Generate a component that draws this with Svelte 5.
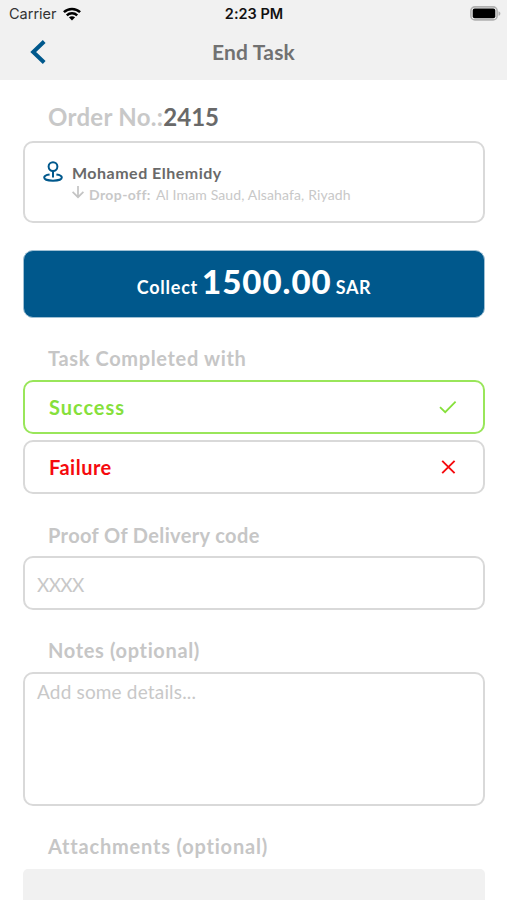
<script>
	let result = 'success';
	let code = '';
	let notes = '';

	const order = {
		number: '2415',
		customer: 'Mohamed Elhemidy',
		address: 'Al Imam Saud, Alsahafa, Riyadh',
		amount: '1500.00',
		currency: 'SAR'
	};

	const options = [
		{ value: 'success', label: 'Success' },
		{ value: 'failure', label: 'Failure' }
	];
</script>

<div class="screen">
	<header>
		<div class="status">
			<div class="carrier">
				<span>Carrier</span>
				<svg width="18" height="14" viewBox="0 0 18 14">
					<g fill="none" stroke="#000" stroke-width="2.5">
						<path d="M0.9 5.2C5.4 0.9 12.6 0.9 17.1 5.2" />
						<path d="M3.8 8.3C6.7 5.6 11.3 5.6 14.2 8.3" />
					</g>
					<path d="M5.9 10.3C7.7 8.8 10.3 8.8 12.1 10.3L9 13.5Z" />
				</svg>
			</div>
			<div class="time">2:23 PM</div>
			<svg class="battery" width="31" height="15" viewBox="0 0 31 15">
				<rect x="0.9" y="0.9" width="26.2" height="13" rx="4" fill="#f1f1f1" stroke="#b0b0b0" stroke-width="1.6" />
				<rect x="2.7" y="2.6" width="22.6" height="9.6" rx="2" />
				<path d="M28.5 5.2C31 6 31 9 28.5 9.8Z" fill="#b0b0b0" />
			</svg>
		</div>
		<div class="nav">
			<button class="back" aria-label="Back">
				<svg width="16" height="24" viewBox="0 0 16 24">
					<path d="M14.2 1.5L3.2 12L14.2 22.5" fill="none" stroke="#00588c" stroke-width="4" />
				</svg>
			</button>
			<h1>End Task</h1>
		</div>
	</header>

	<main>
		<h2 class="order"><span class="no">Order No.:</span><span class="num">{order.number}</span></h2>

		<div class="box customer">
			<svg width="20" height="22" viewBox="0 0 20 22" fill="none" stroke="#00588c" stroke-width="2">
				<circle cx="10" cy="5.6" r="4.4" />
				<path d="M10 10V16.5" />
				<path d="M6.6 13.4C3.5 13.8 1.2 14.9 1.2 16.5C1.2 18.4 5 19.7 10 19.7S18.8 18.4 18.8 16.5C18.8 14.9 16.5 13.8 13.4 13.4" />
			</svg>
			<div class="details">
				<div class="name">{order.customer}</div>
				<div class="drop">
					<svg width="12" height="14" viewBox="0 0 12 14" fill="none" stroke="#c4c4c4" stroke-width="1.7">
						<path d="M6 0V11M0.6 5.8L6 11.2L11.4 5.8" />
					</svg>
					<b>Drop-off:</b>
					<span>{order.address}</span>
				</div>
			</div>
		</div>

		<button class="collect">
			<span class="verb">Collect</span>
			<span class="amount">{order.amount}</span>
			<span class="currency">{order.currency}</span>
		</button>

		<h3 class="task">Task Completed with</h3>
		{#each options as option}
			<button
				class="box option {option.value}"
				class:selected={result === option.value}
				on:click={() => (result = option.value)}
			>
				<span>{option.label}</span>
				{#if option.value === 'success'}
					<svg width="18" height="14" viewBox="0 0 18 14">
						<path d="M1 7.2L6.2 12.2L16.6 1.6" fill="none" stroke="currentColor" stroke-width="1.8" />
					</svg>
				{:else}
					<svg width="18" height="14" viewBox="0 0 18 14">
						<path d="M3.2 0.8L15.6 13.2M15.6 0.8L3.2 13.2" fill="none" stroke="currentColor" stroke-width="1.9" />
					</svg>
				{/if}
			</button>
		{/each}

		<h3 class="proof">Proof Of Delivery code</h3>
		<input class="box code" placeholder="XXXX" bind:value={code} />

		<h3 class="notes-label">Notes (optional)</h3>
		<textarea class="box notes" placeholder="Add some details..." bind:value={notes}></textarea>

		<h3 class="files-label">Attachments (optional)</h3>
		<div class="files"></div>
	</main>
</div>

<style>
	:global(body) {
		margin: 0;
		background: #fff;
	}
	.screen {
		height: 100vh;
		overflow: hidden;
		background: #fff;
		font-family: Lato, sans-serif;
		font-variant-ligatures: none;
		color: #696969;
	}
	.screen * {
		box-sizing: border-box;
	}
	svg {
		display: block;
		flex: none;
	}
	button {
		font: inherit;
		cursor: pointer;
	}

	header {
		height: 80px;
		background: #f1f1f1;
	}
	.status {
		display: grid;
		grid-template-columns: 1fr auto 1fr;
		align-items: center;
		height: 27px;
		padding: 0 6px 0 9px;
		font-family: Inter, sans-serif;
		font-size: 14.5px;
		line-height: 27px;
		color: #111;
	}
	.carrier {
		display: flex;
		align-items: center;
		gap: 6px;
		color: #333;
	}
	.time {
		margin-right: 2px;
		font-weight: 600;
	}
	.battery {
		justify-self: end;
	}
	.nav {
		display: grid;
		grid-template-columns: 1fr auto 1fr;
		align-items: center;
		height: 50px;
	}
	.back {
		width: 48px;
		padding: 0 0 0 30px;
		border: 0;
		background: none;
	}
	h1 {
		margin: 0;
		font-size: 21px;
		line-height: 50px;
		letter-spacing: 0.2px;
		color: #717171;
	}

	main {
		display: flex;
		flex-direction: column;
		padding: 0 22px 0 23px;
	}
	h2,
	h3 {
		margin: 0 0 0 25px;
		white-space: nowrap;
	}
	h2 {
		margin-top: 20px;
		font-size: 24px;
		line-height: 34px;
	}
	.no {
		letter-spacing: 0.3px;
		color: #c8c8c8;
	}
	h3 {
		font-size: 20px;
		line-height: 26px;
		letter-spacing: 0.65px;
		color: #c6c6c6;
	}

	.box {
		width: 100%;
		border: 2px solid #d9d9d9;
		border-radius: 10px;
		background: #fff;
	}
	.customer {
		display: flex;
		gap: 9px;
		height: 82px;
		margin-top: 7px;
		padding: 18px 18px 0;
	}
	.name {
		font-size: 16px;
		font-weight: bold;
		line-height: 24px;
		letter-spacing: 0.5px;
		white-space: nowrap;
	}
	.drop {
		display: flex;
		align-items: center;
		height: 18px;
		font-size: 14px;
		letter-spacing: 0.13px;
		color: #c8c8c8;
		white-space: nowrap;
	}
	.drop svg {
		margin-top: -3px;
	}
	.drop b {
		margin: 0 5px;
		letter-spacing: 0.4px;
	}

	.collect {
		display: flex;
		justify-content: center;
		align-items: baseline;
		gap: 4px;
		height: 68px;
		margin-top: 27px;
		padding: 0;
		border: 1px solid #9fc0d4;
		border-radius: 10px;
		background: #00588c;
		color: #fff;
		font-size: 18px;
		font-weight: bold;
		line-height: 60px;
	}
	.verb {
		letter-spacing: 0.75px;
	}
	.amount {
		font-size: 33px;
		font-weight: 900;
		letter-spacing: 1px;
	}
	.currency {
		letter-spacing: 0.6px;
	}

	.task {
		margin-top: 27px;
	}
	.option {
		display: flex;
		align-items: center;
		justify-content: space-between;
		height: 54px;
		margin-top: 6px;
		padding: 0 26px 0 24px;
		font-size: 20px;
		font-weight: bold;
	}
	.task + .option {
		margin-top: 9px;
	}
	.success {
		letter-spacing: 0.95px;
		color: #86e03b;
	}
	.failure {
		letter-spacing: 0.5px;
		color: #f50a0e;
	}
	.success.selected {
		border-color: #99e65a;
	}

	.proof {
		margin-top: 28px;
		letter-spacing: 0.37px;
	}
	.code,
	.notes {
		padding: 0 12px;
		font-family: inherit;
		font-size: 19px;
		outline: none;
		resize: none;
	}
	.code {
		height: 54px;
		margin-top: 8px;
		padding-top: 2px;
		letter-spacing: -0.7px;
	}
	.code::placeholder,
	.notes::placeholder {
		color: #c8c8c8;
		opacity: 1;
	}
	.notes-label {
		margin-top: 27px;
	}
	.notes {
		height: 134px;
		margin-top: 9px;
		padding-top: 5px;
		line-height: 26px;
		letter-spacing: 0.17px;
	}
	.files-label {
		margin-top: 27px;
		letter-spacing: 0.8px;
	}
	.files {
		height: 60px;
		margin-top: 10px;
		border-radius: 5px 5px 0 0;
		background: #f1f1f1;
	}
</style>
